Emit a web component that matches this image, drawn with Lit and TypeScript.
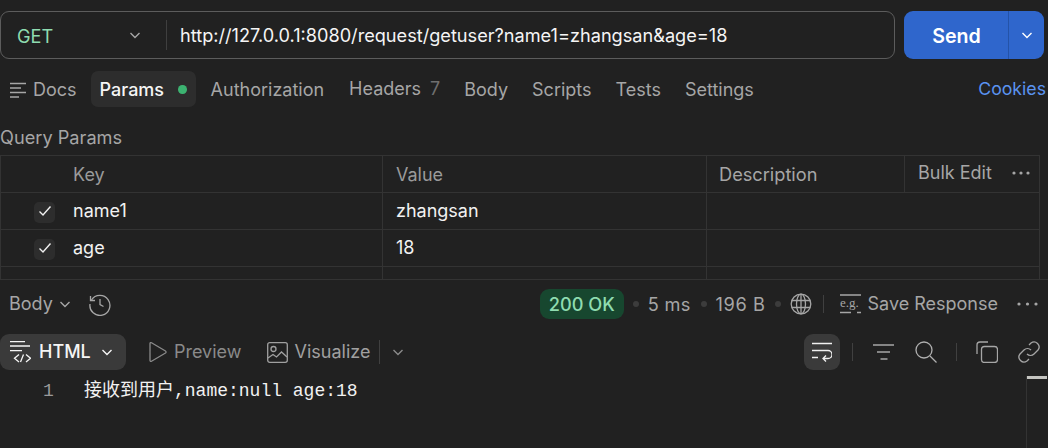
import { LitElement, html, css, svg } from "lit";
import { customElement } from "lit/decorators.js";

const chev = (w = 12) => html`<svg width=${w} height=${w} viewBox="0 0 12 12" fill="none" stroke="currentColor" stroke-width="1.4"><path d="M1.500 4l4.500 4.500L10.500 4"/></svg>`;
const icon = (w: number, h: number, body: unknown) => html`<svg width=${w} height=${h} viewBox="0 0 ${w} ${h}" fill="none" stroke="currentColor" stroke-width="1.3">${body}</svg>`;
const dots = (w = 18) => html`<svg width=${w} height="4" viewBox="0 0 ${w} 4" fill="currentColor"><circle cx="2" cy="2" r="1.600"/><circle cx=${w / 2} cy="2" r="1.600"/><circle cx=${w - 2} cy="2" r="1.600"/></svg>`;
const check = html`<span class="check"><svg width="14" height="12" viewBox="0 0 14 12" fill="none" stroke="#f0f0f0" stroke-width="1.400"><path d="M1.500 6.500l3.500 3.500 7.500-8.500"/></svg></span>`;

@customElement("app-root")
export class AppRoot extends LitElement {
  static styles = css`
    :host { display: block; width: 1048px; height: 448px; overflow: hidden; background: #212121; color: #f2f2f2; font: 18px/24px Inter, "Noto Sans CJK SC", sans-serif; }
    svg { display: block; flex: none; }
    .urlrow { display: flex; padding: 11px 4px 0 0; gap: 9px; }
    .url { flex: 1; height: 48px; box-sizing: border-box; border: 1px solid #5c5c5c; border-radius: 9px; display: flex; align-items: center; }
    .method { width: 166px; box-sizing: border-box; padding: 2px 25px 0 16px; display: flex; justify-content: space-between; align-items: center; color: #8fdcb0; height: 30px; border-right: 1px solid #3f3f3f; font-size: 18.2px; }
    .method svg { color: #a6a6a6; margin-top: -2px; }
    .urltext { padding: 0 0 0 13px; color: #f5f5f5; font-size: 18.15px; }
    .send { width: 140px; height: 48px; display: flex; border-radius: 9px; background: #2f66cc; color: #fff; overflow: hidden; }
    .send b { font-weight: 600; font-size: 19.6px; padding: 1px 0 0 1px; box-sizing: border-box; width: 105px; display: flex; align-items: center; justify-content: center; border-right: 1px solid #2453a8; }
    .send i { flex: 1; display: flex; align-items: center; justify-content: center; }
    .tabs { display: flex; align-items: center; height: 36px; margin-top: 12px; gap: 6px; color: #a6a6a6; }
    .tab { padding: 1px 9px 0; height: 36px; box-sizing: border-box; display: flex; align-items: center; border-radius: 7px; }
    .tab.docs { padding: 1px 6px 0 10px; gap: 7px; margin-right: 2px; }
    .tab.on { background: #2d2d2d; color: #f5f5f5; font-weight: 500; width: 105px; gap: 14px; }
    .tab.up { padding-top: 0; padding-bottom: 1px; margin-left: 1px; }
    .dot { width: 9px; height: 9px; border-radius: 50%; background: #3cb371; }
    .count { color: #6f6f6f; margin-left: 9px; }
    .cookies { margin-left: auto; color: #5a93f0; padding-right: 2px; font-size: 17.7px; }
    .qp { color: #a6a6a6; margin: 18px 0 6px; line-height: 24px; height: 24px; font-size: 18.2px; }
    .table { height: 124px; width: 1040px; box-sizing: border-box; border: 1px solid #333; border-bottom: none; overflow: hidden; }
    .tr { display: grid; grid-template-columns: 382px 324px 1fr; height: 37px; box-sizing: border-box; border-bottom: 1px solid #333; }
    .td { border-right: 1px solid #333; display: flex; align-items: center; padding: 0 0 0 13px; }
    .td:last-child { border-right: none; }
    .key { padding-left: 33px; gap: 18px; }
    .key.nocheck { padding-left: 72px; }
    .check { width: 21px; height: 21px; margin-top: 3px; background: #2d2d2d; border-radius: 5px; display: flex; align-items: center; justify-content: center; }
    .check svg { margin-top: -3px; }
    .tr.head { color: #9a9a9a; }
    .tr.head .td { padding-top: 1px; }
    .tr.head .td.desc { padding: 0; }
    .desc > span { flex: 1; padding-left: 12px; color: #a6a6a6; font-size: 18.2px; }
    .bulk { width: 135px; box-sizing: border-box; height: 36px; border-left: 1px solid #333; display: flex; align-items: center; justify-content: space-between; padding: 0 9px 2px 13px; color: #a6a6a6; }
    .resp { height: 55px; border-top: 1px solid #333; box-sizing: border-box; display: flex; align-items: center; padding: 0 10px 6px 9px; color: #a6a6a6; }
    .bodyl { display: flex; align-items: center; gap: 6px; margin-right: 17px; }
    .right { margin-left: auto; display: flex; align-items: center; }
    .ok { background: #17472f; color: #8fdcb0; border-radius: 9px; height: 30px; width: 84px; display: flex; align-items: center; justify-content: center; font-weight: 500; font-size: 18.2px; }
    .sep { width: 6px; height: 6px; border-radius: 50%; background: #3c3c3c; margin: 0 9px; }
    .sep.wide { margin-left: 10px; }
    .ms { font-size: 18.2px; letter-spacing: .25px; }
    .size { font-size: 18.2px; letter-spacing: .6px; }
    .vbar { width: 1px; height: 18px; background: #404040; }
    .save { display: flex; align-items: center; gap: 7px; }
    .viewrow { display: flex; align-items: center; height: 36px; color: #a6a6a6; }
    .fmt { display: flex; align-items: center; height: 36px; width: 126px; box-sizing: border-box; background: #3a3a3a; border-radius: 9px; color: #f5f5f5; padding: 0 13px 0 10px; font-weight: 500; }
    .fmt svg:last-child { margin-left: auto; }
    .vitem { display: flex; align-items: center; gap: 7px; }
    .wrapbtn { width: 36px; height: 36px; background: #3a3a3a; border-radius: 9px; display: flex; align-items: center; justify-content: center; color: #f0f0f0; }
    .tools { margin-left: auto; display: flex; align-items: center; padding-right: 8px; }
    .code { position: relative; display: flex; height: 78px; box-sizing: border-box; padding-top: 9px; font: 18px/24px "Liberation Mono", "Noto Sans CJK SC", monospace; color: #f2f2f2; }
    .ln { width: 84px; box-sizing: border-box; padding-left: 43px; color: #9a9a9a; }
    .thumb { position: absolute; right: 1px; top: 6px; width: 21px; height: 72px; box-sizing: border-box; border-left: 1px solid #333; }
    .thumb::before { content: ""; position: absolute; left: 0; top: 0; width: 20px; height: 3px; background: #c4c4c0; }
  `;

  private row(k: string, v: string) {
    return html`<div class="tr"><div class="td key">${check}<span>${k}</span></div><div class="td">${v}</div><div class="td"></div></div>`;
  }

  render() {
    return html`
      <div class="urlrow">
        <div class="url">
          <div class="method"><span>GET</span>${chev()}</div>
          <div class="urltext">http://127.0.0.1:8080/request/getuser?name1=zhangsan&amp;age=18</div>
        </div>
        <div class="send"><b>Send</b><i>${chev()}</i></div>
      </div>
      <div class="tabs">
        <div class="tab docs">${icon(16, 16, svg`<path d="M0 1.500h16M0 6h11M0 10.500h16M0 15h9"/>`)}<span>Docs</span></div>
        <div class="tab on"><span>Params</span><span class="dot"></span></div>
        <div class="tab">Authorization</div>
        <div class="tab up">Headers<span class="count">7</span></div>
        <div class="tab">Body</div>
        <div class="tab">Scripts</div>
        <div class="tab">Tests</div>
        <div class="tab">Settings</div>
        <div class="cookies">Cookies</div>
      </div>
      <div class="qp">Query Params</div>
      <div class="table">
        <div class="tr head"><div class="td key nocheck">Key</div><div class="td">Value</div><div class="td desc"><span>Description</span><div class="bulk">Bulk Edit ${dots()}</div></div></div>
        ${this.row("name1", "zhangsan")}
        ${this.row("age", "18")}
        <div class="tr"><div class="td"></div><div class="td"></div><div class="td"></div></div>
      </div>
      <div class="resp">
        <div class="bodyl"><span>Body</span>${chev(12)}</div>
        ${icon(24, 24, svg`<path d="M3.500 8A10 10 0 1 1 2 12"/><path d="M2.500 4v4.500H7M12 7v5.500l3.500 2"/>`)}
        <div class="right">
          <div class="ok">200 OK</div><span class="sep"></span><span class="ms">5 ms</span><span class="sep wide"></span><span class="size">196 B</span><span class="sep"></span>
          ${icon(22, 22, svg`<circle cx="11" cy="11" r="9.800"/><ellipse cx="11" cy="11" rx="4.500" ry="9.800"/><path d="M11 1v20M1.800 7.500h18.400M1.800 14.500h18.400"/>`)}
          <span class="vbar" style="margin:0 16px 0 11px"></span>
          <div class="save">${icon(21, 20, svg`<path d="M0 1h21M0 18.500h11M17 18.500h4"/><text x="0" y="13" font-size="13" fill="currentColor" stroke="none" font-family="Liberation Serif">e.g.</text>`)}<span>Save Response</span></div>
          <span style="margin-left:19px">${dots(21)}</span>
        </div>
      </div>
      <div class="viewrow">
        <div class="fmt">${icon(21, 22, svg`<path d="M0 .7h15M0 5h20M0 9.700h12M9 13.500l-4.500 3.700 4.500 3.700M16 13.500l4.500 3.700-4.500 3.700M13.500 13.500l-3 7.500"/>`)}<span style="margin-left:8px">HTML</span>${chev()}</div>
        <div class="vitem" style="margin-left:22px;color:#8a8a8a">${icon(19, 22, svg`<path d="M2 2.500v17a1 1 0 0 0 1.500.8L17.500 12a1.200 1.200 0 0 0 0-2L3.500 1.700A1 1 0 0 0 2 2.500z"/>`)}<span>Preview</span></div>
        <div class="vitem" style="margin-left:25px;color:#a0a0a0">${icon(21, 21, svg`<rect x=".7" y=".7" width="19.600" height="19.600" rx="2"/><circle cx="6.500" cy="7" r="2.500"/><path d="M1 16l5-3.500 3.500 2.500 5-5 5.500 5"/>`)}<span>Visualize</span></div>
        <span class="vbar" style="margin:0 12px 0 9px;height:24px"></span>
        <span style="color:#8a8a8a">${chev()}</span>
        <div class="tools">
          <div class="wrapbtn">${icon(20, 20, svg`<path d="M0 1.500h20M0 8.500h16a3.500 3.500 0 0 1 0 8h-5M0 15.500h6M14 13.500l-3 3 3 3"/>`)}</div>
          <span class="vbar" style="margin:0 20px 0 12px"></span>
          <span style="color:#a6a6a6">${icon(21, 16, svg`<path d="M0 1h21M4 8h13M7.500 15h7"/>`)}</span>
          <span style="margin-left:21px;color:#b0b0b0">${icon(22, 22, svg`<circle cx="9" cy="9" r="8"/><path d="M15 15l6.500 6.500"/>`)}</span>
          <span class="vbar" style="margin:0 19px 0 19px"></span>
          <span style="color:#a6a6a6">${icon(22, 22, svg`<rect x="5.500" y="5.500" width="16" height="16" rx="3"/><path d="M12 1H4a3 3 0 0 0-3 3v9"/>`)}</span>
          <span style="margin-left:20px;color:#a6a6a6">${icon(22, 22, svg`<path d="M9 13a5 5 0 0 0 7 0l4-4a5 5 0 0 0-7-7l-2 2"/><path d="M13 9a5 5 0 0 0-7 0l-4 4a5 5 0 0 0 7 7l2-2"/>`)}</span>
        </div>
      </div>
      <div class="code">
        <div class="ln">1</div>
        <div>接收到用户,name:null age:18</div>
        <div class="thumb"></div>
      </div>
    `;
  }
}
